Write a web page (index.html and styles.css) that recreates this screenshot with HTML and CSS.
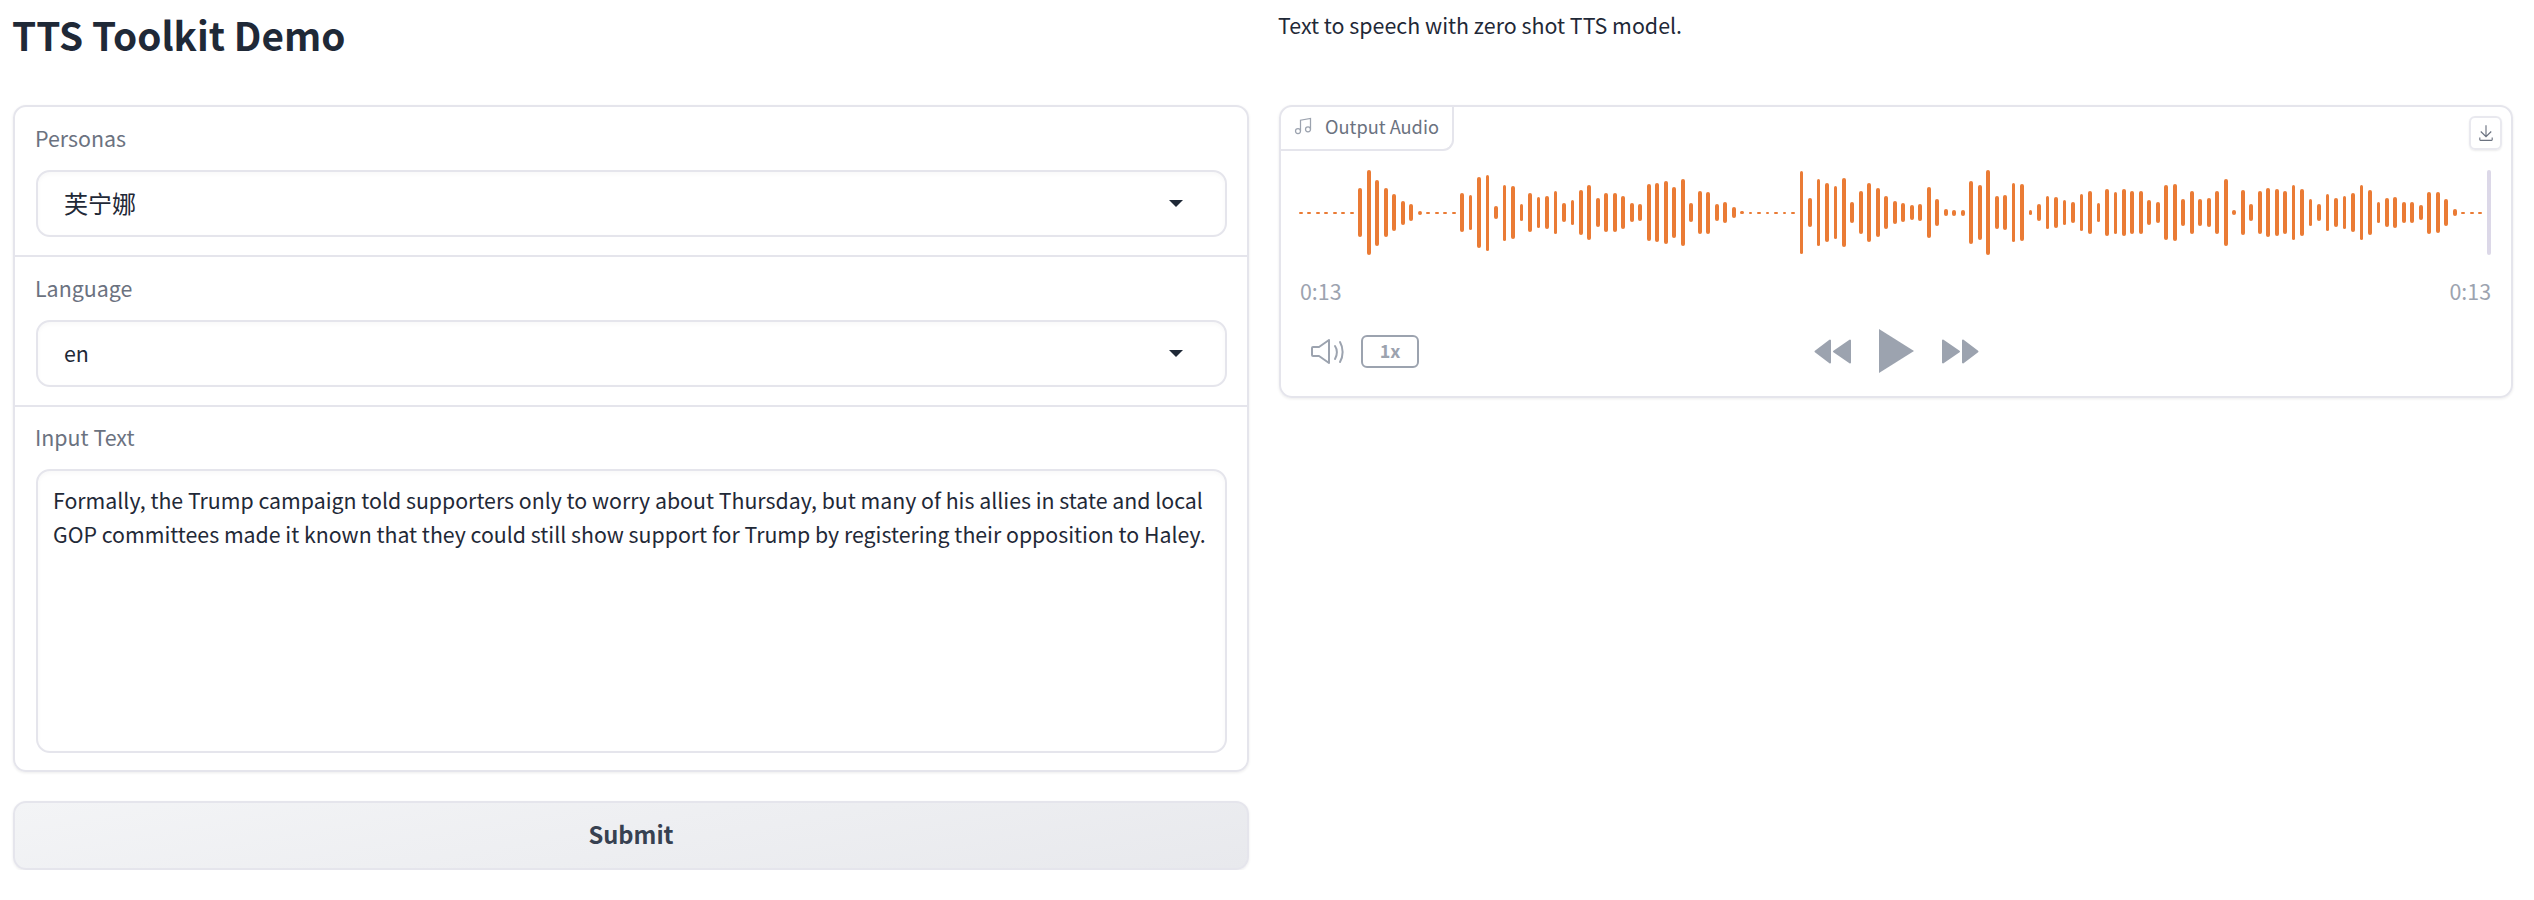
FILE: index.html

```html
<!DOCTYPE html>
<html lang="en">
<head>
  <meta charset="UTF-8">
  <title>TTS Toolkit Demo</title>
  <link rel="stylesheet" href="styles.css">
</head>
<body>
  <div class="top-edge"></div>
  <main class="page">
    <h1 class="title">TTS Toolkit Demo</h1>
    <p class="description">Text to speech with zero shot TTS model.</p>

    <div class="left-col">
      <section class="panel">
        <div class="field">
          <label class="field-label">Personas</label>
          <div class="dropdown">
            <span class="cjk">芙宁娜</span>
            <svg class="caret" viewBox="0 0 14 7"><polygon points="0,0 14,0 7,7"/></svg>
          </div>
        </div>
        <div class="field">
          <label class="field-label">Language</label>
          <div class="dropdown">
            <span>en</span>
            <svg class="caret" viewBox="0 0 14 7"><polygon points="0,0 14,0 7,7"/></svg>
          </div>
        </div>
        <div class="field field-thin">
          <label class="field-label">Input Text</label>
          <textarea class="input-text" readonly>Formally, the Trump campaign told supporters only to worry about Thursday, but many of his allies in state and local GOP committees made it known that they could still show support for Trump by registering their opposition to Haley.</textarea>
        </div>
      </section>
      <button class="submit">Submit</button>
    </div>

    <section class="audio-card">
      <div class="audio-head">
        <div class="audio-tab">
          <svg class="music-icon" viewBox="0 0 24 24"><path d="M9 18V5l12-2v13"/><circle cx="6" cy="18" r="3"/><circle cx="18" cy="16" r="3"/></svg>
          <span>Output Audio</span>
        </div>
        <a class="download">
          <svg viewBox="0 0 32 32"><path d="M26 24v4H6v-4H4v4a2 2 0 0 0 2 2h20a2 2 0 0 0 2-2v-4zm0-10l-1.41-1.41L17 20.17V2h-2v18.17l-7.59-7.58L6 14l10 10l10-10z"/></svg>
        </a>
      </div>

      <div class="wave">
        <i style="height:2px"></i><i style="height:2px"></i><i style="height:2px"></i><i style="height:2px"></i><i style="height:2px"></i><i style="height:2px"></i><i style="height:2px"></i>
        <i style="height:49px"></i><i style="height:85px"></i><i style="height:66px"></i><i style="height:49px"></i><i style="height:37px"></i><i style="height:24px"></i><i style="height:17px"></i><i style="height:4px"></i>
        <i style="height:2px"></i><i style="height:2px"></i><i style="height:2px"></i><i style="height:2px"></i>
        <i style="height:39px"></i><i style="height:35px"></i><i style="height:71px"></i><i style="height:76px"></i><i style="height:13px"></i><i style="height:56px"></i><i style="height:53px"></i><i style="height:17px"></i>
        <i style="height:39px"></i><i style="height:31px"></i><i style="height:33px"></i><i style="height:43px"></i><i style="height:19px"></i><i style="height:25px"></i><i style="height:45px"></i><i style="height:55px"></i>
        <i style="height:29px"></i><i style="height:39px"></i><i style="height:39px"></i><i style="height:33px"></i><i style="height:19px"></i><i style="height:17px"></i><i style="height:57px"></i><i style="height:59px"></i>
        <i style="height:63px"></i><i style="height:51px"></i><i style="height:67px"></i><i style="height:19px"></i><i style="height:43px"></i><i style="height:42px"></i><i style="height:17px"></i><i style="height:21px"></i>
        <i style="height:11px"></i><i style="height:3px"></i>
        <i style="height:2px"></i><i style="height:2px"></i><i style="height:2px"></i><i style="height:2px"></i><i style="height:2px"></i><i style="height:2px"></i>
        <i style="height:83px"></i><i style="height:29px"></i><i style="height:67px"></i><i style="height:59px"></i><i style="height:53px"></i><i style="height:69px"></i><i style="height:21px"></i><i style="height:43px"></i>
        <i style="height:59px"></i><i style="height:49px"></i><i style="height:33px"></i><i style="height:23px"></i><i style="height:19px"></i><i style="height:15px"></i><i style="height:17px"></i><i style="height:51px"></i>
        <i style="height:27px"></i><i style="height:7px"></i><i style="height:6px"></i><i style="height:6px"></i><i style="height:63px"></i><i style="height:55px"></i><i style="height:85px"></i><i style="height:33px"></i>
        <i style="height:35px"></i><i style="height:59px"></i><i style="height:57px"></i><i style="height:5px"></i><i style="height:17px"></i><i style="height:33px"></i><i style="height:31px"></i><i style="height:25px"></i>
        <i style="height:21px"></i><i style="height:37px"></i><i style="height:43px"></i><i style="height:19px"></i><i style="height:47px"></i><i style="height:42px"></i><i style="height:47px"></i><i style="height:43px"></i>
        <i style="height:43px"></i><i style="height:25px"></i><i style="height:21px"></i><i style="height:55px"></i><i style="height:57px"></i><i style="height:27px"></i><i style="height:43px"></i><i style="height:27px"></i>
        <i style="height:29px"></i><i style="height:43px"></i><i style="height:67px"></i><i style="height:5px"></i><i style="height:45px"></i><i style="height:17px"></i><i style="height:43px"></i><i style="height:49px"></i>
        <i style="height:47px"></i><i style="height:43px"></i><i style="height:55px"></i><i style="height:47px"></i><i style="height:27px"></i><i style="height:17px"></i><i style="height:37px"></i><i style="height:29px"></i>
        <i style="height:33px"></i><i style="height:39px"></i><i style="height:55px"></i><i style="height:45px"></i><i style="height:21px"></i><i style="height:29px"></i><i style="height:31px"></i><i style="height:21px"></i>
        <i style="height:21px"></i><i style="height:15px"></i><i style="height:42px"></i><i style="height:41px"></i><i style="height:27px"></i><i style="height:7px"></i>
        <i style="height:2px"></i><i style="height:2px"></i><i style="height:2px"></i>
        <i class="cursor"></i>
      </div>

      <div class="times">
        <span>0:13</span>
        <span>0:13</span>
      </div>

      <div class="controls">
        <div class="controls-left">
          <svg class="volume" viewBox="0 0 33 25"><path d="M2 8h6l10-7v23L8 17H2a1 1 0 0 1-1-1V9a1 1 0 0 1 1-1z"/><path d="M24 7c2.5 3.5 2.5 9 0 13"/><path d="M29 3c3.5 6 3.5 14 0 20"/></svg>
          <span class="speed">1x</span>
        </div>
        <div class="controls-mid">
          <svg class="skip" viewBox="0 0 37 25"><polygon points="1.5,12.5 16,1.5 16,23.5"/><polygon points="20,12.5 36,1.5 36,23.5"/></svg>
          <svg class="play" viewBox="0 0 35 44"><polygon points="0,0 35,22 0,44"/></svg>
          <svg class="skip" viewBox="0 0 37 25"><polygon points="1,1.5 17,12.5 1,23.5"/><polygon points="21,1.5 35.5,12.5 21,23.5"/></svg>
        </div>
      </div>
    </section>
  </main>
</body>
</html>
```

FILE: styles.css

```css
* {
  box-sizing: border-box;
}
body {
  margin: 0;
  background-color: white;
  color: #1f2937;
  font-family: "Noto Sans CJK SC", "Noto Sans", sans-serif;
  font-size: 21.4px;
}
.top-edge {
  height: 0;
  box-shadow: 0 0 8px rgba(0,0,0,0.15);
}
.page {
  display: grid;
  grid-template-columns: 1236px 1234px;
  grid-template-rows: 105px auto;
  column-gap: 30px;
  align-items: start;
  padding: 0 21px 0 13px;
}
.title {
  margin: 0 0 0 -1px;
  padding-top: 9px;
  font-size: 38.7px;
  line-height: 50px;
  font-weight: 600;
}
.description {
  margin: 0 0 0 -1px;
  padding-top: 8px;
  line-height: 34px;
}

.panel {
  border: 2px solid #e5e5ec;
  border-radius: 13px;
  box-shadow: 0 1px 3px rgba(0,0,0,0.08);
}
.field {
  padding: 16px 20px 18px 21px;
  border-bottom: 2px solid #e5e5ec;
}
.field-thin {
  border-bottom: none;
  border-top: 1px solid #e5e5ec;
  margin-top: -2px;
  padding-bottom: 17px;
}
.field-label {
  display: block;
  height: 33px;
  margin: 0 0 14px -1px;
  line-height: 30px;
  color: #6b7280;
}
.dropdown {
  display: flex;
  align-items: center;
  justify-content: space-between;
  height: 67px;
  padding: 0 42px 3px 26px;
  border: 2px solid #e5e5ec;
  border-radius: 14px;
  box-shadow: inset 0 2px 4px rgba(0,0,0,0.03);
}
.cjk {
  font-size: 24px;
}
.caret {
  width: 14px;
  height: 7px;
  margin-top: 3px;
  fill: #1f2937;
}
.input-text {
  display: block;
  width: 100%;
  height: 284px;
  padding: 12px 6px 12px 15px;
  border: 2px solid #e5e5ec;
  border-radius: 14px;
  box-shadow: inset 0 2px 4px rgba(0,0,0,0.03);
  color: #1f2937;
  font-family: inherit;
  font-size: 21.3px;
  line-height: 33.6px;
  resize: none;
  outline: none;
}
.submit {
  display: block;
  width: 100%;
  height: 69px;
  margin-top: 29px;
  padding-bottom: 4px;
  border: 2px solid #e5e5ec;
  border-radius: 13px;
  background: linear-gradient(170deg, #f3f4f6, #e8e9ed);
  box-shadow: 0 1px 3px rgba(0,0,0,0.08);
  color: #374151;
  font-family: inherit;
  font-size: 23.7px;
  font-weight: 600;
}

.audio-card {
  border: 2px solid #e5e5ec;
  border-radius: 13px;
  box-shadow: 0 1px 3px rgba(0,0,0,0.08);
  padding-bottom: 23px;
}
.audio-head {
  display: flex;
  justify-content: space-between;
  align-items: flex-start;
  height: 44px;
}
.audio-tab {
  display: flex;
  align-items: center;
  gap: 12px;
  width: 173px;
  height: 44px;
  padding: 0 0 4px 12px;
  border-right: 2px solid #e5e5ec;
  border-bottom: 2px solid #e5e5ec;
  border-radius: 13px 0 11px 0;
  color: #6b7280;
  font-size: 18.2px;
}
.music-icon {
  width: 20px;
  height: 20px;
  fill: none;
  stroke: #9ca3af;
  stroke-width: 1.5;
}
.download {
  display: flex;
  align-items: center;
  justify-content: center;
  width: 33px;
  height: 34px;
  margin: 9px 9px 0 0;
  border: 2px solid #e9e9ef;
  border-radius: 6px;
  box-shadow: 0 1px 2px rgba(0,0,0,0.08);
}
.download svg {
  width: 18px;
  height: 18px;
  fill: #6b7280;
}

.wave {
  display: flex;
  align-items: center;
  gap: 4.7px;
  height: 85px;
  margin-top: 19px;
  padding-left: 18px;
}
.wave i {
  flex: none;
  width: 3.8px;
  border-radius: 2px;
  background-color: #ea7b35;
}
.wave .cursor {
  height: 85px;
  background-color: #dcd8e8;
}
.times {
  display: flex;
  justify-content: space-between;
  height: 30px;
  margin-top: 22px;
  padding: 0 20px 0 19px;
  color: #9ca3af;
  line-height: 27px;
}
.controls {
  display: grid;
  grid-template-columns: 1fr auto 1fr;
  align-items: center;
  height: 44px;
  margin-top: 22px;
}
.controls-left {
  display: flex;
  align-items: center;
  gap: 17px;
  padding-left: 30px;
}
.volume {
  width: 33px;
  height: 25px;
  fill: none;
  stroke: #9ca3af;
  stroke-width: 2;
  stroke-linecap: round;
  stroke-linejoin: round;
}
.speed {
  width: 58px;
  height: 33px;
  border: 2px solid #9ca3af;
  border-radius: 6px;
  color: #9ca3af;
  font-size: 18px;
  font-weight: 600;
  line-height: 27px;
  text-align: center;
}
.controls-mid {
  display: flex;
  align-items: center;
  gap: 28px;
}
.skip {
  width: 37px;
  height: 25px;
  fill: #9ca3af;
  stroke: #9ca3af;
  stroke-width: 2;
  stroke-linejoin: round;
}
.play {
  width: 35px;
  height: 44px;
  fill: #9ca3af;
}
```
